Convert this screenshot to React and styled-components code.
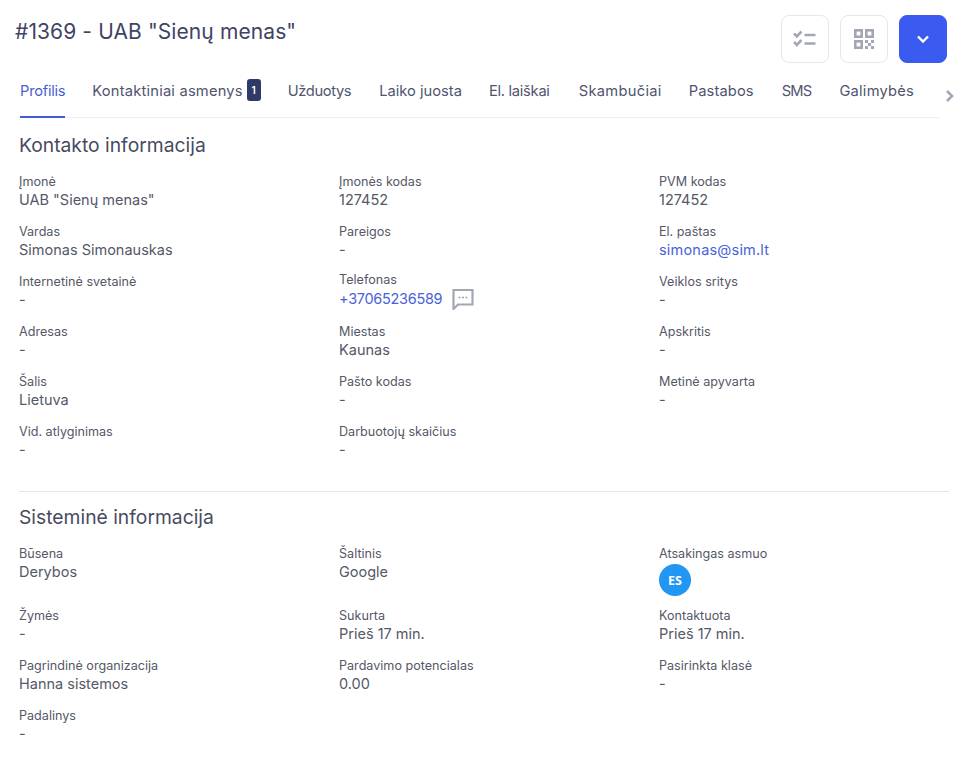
import React from "react";
import styled, { createGlobalStyle } from "styled-components";

const Global = createGlobalStyle`
  html, body { margin: 0; padding: 0; background: #fff; }
  body { font-family: "Inter", "Noto Sans", sans-serif; color: #3f4254; }
`;
const Page = styled.div`
  width: 967px; height: 775px; box-sizing: border-box; padding: 15px 18px 0 15px; overflow: hidden;
`;
const Header = styled.header`
  display: flex; justify-content: space-between; align-items: flex-start; height: 48px;
`;
const Title = styled.h1`
  margin: 3px 0 0; font-size: 21px; line-height: 27px; font-weight: 400; color: #3f4463; letter-spacing: 0.1px;
`;
const Actions = styled.div`
  display: flex; gap: 11px; margin-right: 2px;
`;
const IconButton = styled.button`
  width: 48px; height: 48px; padding: 0; border-radius: 8px; display: flex; align-items: center; justify-content: center;
  border: 1px solid ${p => (p.$primary ? "#3b5bf0" : "#e6e7ec")};
  background: ${p => (p.$primary ? "#3b5bf0" : "#fff")};
`;
const TabBar = styled.nav`
  display: flex; align-items: flex-start; height: 55px; padding-left: 1px; margin-left: 4px; width: 920px; border-bottom: 1px solid #eceef2; position: relative; box-sizing: border-box;
`;
const Tab = styled.div`
  margin: 19px ${p => p.$gap}px 0 0; font-size: 14.7px; line-height: 18px; white-space: nowrap; flex: none;
  letter-spacing: ${p => p.$ls}px;
  display: flex; align-items: flex-start; gap: 4px; box-sizing: border-box;
  color: ${p => (p.$active ? "#4a5fd0" : "#50546e")};
  height: ${p => (p.$active ? 36 : 30)}px;
  ${p => (p.$active ? "border-bottom: 2px solid #3f5bd9; margin-bottom: -1px;" : "")}
`;
const Badge = styled.span`
  width: 14px; height: 22px; margin-top: -3px; border-radius: 3px; background: #2f3a66; color: #fff; font-size: 10px; font-weight: 600;
  display: flex; align-items: center; justify-content: center;
`;
const Chevron = styled.span`
  position: absolute; left: 926px; top: 26px; display: flex;
`;
const Section = styled.section`
  padding: ${p => p.$top}px 0 0 4px;
`;
const Heading = styled.h2`
  margin: 0 0 ${p => p.$after}px; font-size: 19.3px; line-height: 24px; font-weight: 400; color: #474b60;
`;
const Grid = styled.div`
  display: grid; grid-template-columns: repeat(3, 320px);
`;
const Field = styled.div`
  height: ${p => p.$h ?? 50}px; display: flex; flex-direction: column; align-items: flex-start;
  margin-top: ${p => (p.$raised ? -2 : 0)}px;
  gap: ${p => (p.$raised ? 1 : 0)}px;
`;
const Label = styled.div`
  font-size: 12.6px; line-height: 18px; color: #555867; height: 17px;
`;
const Value = styled.div`
  font-size: 14.5px; line-height: 20px; height: 20px; color: ${p => (p.$link ? "#4a62d8" : "#555867")};
  letter-spacing: ${p => p.$ls ?? 0}px;
  display: flex; align-items: center; gap: 10px;
`;
const Divider = styled.hr`
  margin: 18px 0 0 4px; width: 930px; border: 0; border-top: 1px solid #e4e6ea;
`;
const Avatar = styled.div`
  width: 32px; height: 32px; border-radius: 50%; background: #2196f3; color: #fff; margin-top: 2px;
  font-size: 12.5px; font-weight: 700; display: flex; align-items: center; justify-content: center;
  font-family: "Open Sans", sans-serif;
`;

const contact = [
  ["Įmonė", 'UAB "Sienų menas"'], ["Įmonės kodas", "127452"], ["PVM kodas", "127452"],
  ["Vardas", "Simonas Simonauskas"], ["Pareigos", "-"], ["El. paštas", "simonas@sim.lt", "link"],
  ["Internetinė svetainė", "-"], ["Telefonas", "+37065236589", "phone"], ["Veiklos sritys", "-"],
  ["Adresas", "-"], ["Miestas", "Kaunas"], ["Apskritis", "-"],
  ["Šalis", "Lietuva"], ["Pašto kodas", "-"], ["Metinė apyvarta", "-"],
  ["Vid. atlyginimas", "-"], ["Darbuotojų skaičius", "-"],
];
const system = [
  ["Būsena", "Derybos", null, 62], ["Šaltinis", "Google", null, 62], ["Atsakingas asmuo", "ES", "avatar", 62],
  ["Žymės", "-"], ["Sukurta", "Prieš 17 min."], ["Kontaktuota", "Prieš 17 min."],
  ["Pagrindinė organizacija", "Hanna sistemos"], ["Pardavimo potencialas", "0.00"], ["Pasirinkta klasė", "-"],
  ["Padalinys", "-"],
];
const tabs = [
  { name: "Profilis", gap: 27, ls: -0.25 },
  { name: "Kontaktiniai asmenys", gap: 27, ls: 0.2, badge: 1 },
  { name: "Užduotys", gap: 28, ls: -0.37 },
  { name: "Laiko juosta", gap: 27, ls: 0 },
  { name: "El. laiškai", gap: 29, ls: -0.27 },
  { name: "Skambučiai", gap: 27, ls: 0.3 },
  { name: "Pastabos", gap: 28, ls: 0.12 },
  { name: "SMS", gap: 28, ls: -0.8 },
  { name: "Galimybės", gap: 0, ls: 0.22 },
];

const ChatIconSvg = styled.svg`
  margin: -2px 0; flex: none;
`;
const ChatIcon = () => (
  <ChatIconSvg width="22" height="22" viewBox="0 0 22 22" fill="none">
    <path d="M1.5 2h19v14.5H6L1.5 21V2z" stroke="#a3a7b5" strokeWidth="2.2" />
    <path d="M6.5 9.5h2M10 9.5h2M13.5 9.5h2" stroke="#a3a7b5" strokeWidth="1.6" />
  </ChatIconSvg>
);

const renderValue = (value, kind) => {
  if (kind === "avatar") return <Avatar>{value}</Avatar>;
  if (kind === "phone") return <Value $link $ls={-0.3}>{value}<ChatIcon /></Value>;
  return <Value $link={kind === "link"} $ls={kind === "link" ? 0.2 : 0}>{value}</Value>;
};

const Fields = ({ items }) => (
  <Grid>
    {items.map(([label, value, kind, h]) => (
      <Field key={label} $h={h} $raised={kind === "phone"}>
        <Label>{label}</Label>
        {renderValue(value, kind)}
      </Field>
    ))}
  </Grid>
);

export default function App() {
  return (
    <Page>
      <Global />
      <Header>
        <Title>#1369 - UAB "Sienų menas"</Title>
        <Actions>
          <IconButton aria-label="Užduotys">
            <svg width="24" height="20" viewBox="0 0 24 20" fill="none" stroke="#a3a7b5" strokeWidth="2.6">
              <path d="M1 4.5l2.8 2.8L8.5 2.5M1 13l2.8 2.8L8.5 11" />
              <path d="M11.5 6h11M11.5 14.5h11" />
            </svg>
          </IconButton>
          <IconButton aria-label="QR">
            <svg width="20" height="20" viewBox="0 0 20 20" fill="none" stroke="#a3a7b5" strokeWidth="2.6">
              <rect x="1.3" y="1.3" width="6.4" height="6.4" />
              <rect x="12.3" y="1.3" width="6.4" height="6.4" />
              <rect x="1.3" y="12.3" width="6.4" height="6.4" />
              <path d="M11 11h3v3h-3zM17 11h3v3h-3zM14 14h3v3h-3zM11 17h3v3h-3zM17 17h3v3h-3z" stroke="none" fill="#a3a7b5" />
            </svg>
          </IconButton>
          <IconButton $primary aria-label="Daugiau">
            <svg width="14" height="10" viewBox="0 0 14 10" fill="none" stroke="#fff" strokeWidth="2.4">
              <path d="M2 2.5l5 5 5-5" />
            </svg>
          </IconButton>
        </Actions>
      </Header>
      <TabBar>
        {tabs.map(({ name, gap, ls, badge }, i) => (
          <Tab key={name} $gap={gap} $ls={ls} $active={i === 0}>
            {name}
            {badge ? <Badge>{badge}</Badge> : null}
          </Tab>
        ))}
        <Chevron>
          <svg width="10" height="14" viewBox="0 0 10 14" fill="none" stroke="#a3a7b5" strokeWidth="2.6">
            <path d="M2 2l5 5-5 5" />
          </svg>
        </Chevron>
      </TabBar>
      <Section $top={15}>
        <Heading $after={16}>Kontakto informacija</Heading>
        <Fields items={contact} />
      </Section>
      <Divider />
      <Section $top={13}>
        <Heading $after={16}>Sisteminė informacija</Heading>
        <Fields items={system} />
      </Section>
    </Page>
  );
}
